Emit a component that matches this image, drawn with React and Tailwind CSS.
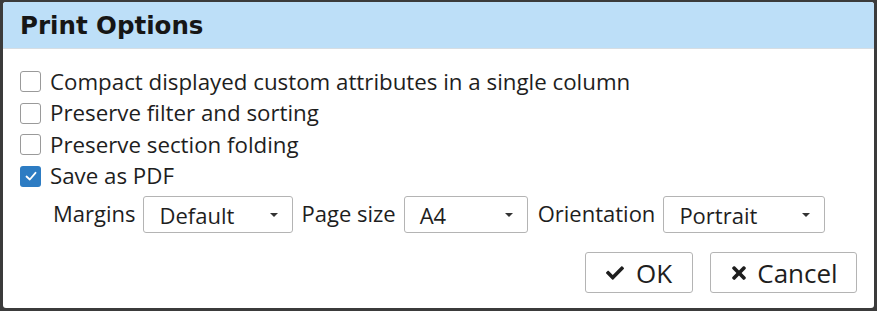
import { FaCheck, FaTimes } from "react-icons/fa";

const body = { fontFamily: '"Open Sans", "Noto Sans", sans-serif' };

function Box({ checked }) {
  if (checked) {
    return (
      <span className="flex h-[21px] w-[21px] shrink-0 items-center justify-center rounded-[3px] bg-[#2d7cc3]">
        <svg width="14" height="14" viewBox="0 0 14 14" fill="none">
          <path d="M2.5 7.5 L5.8 10.5 L11.5 3.8" stroke="white" strokeWidth="1.8" strokeLinecap="round" strokeLinejoin="round" />
        </svg>
      </span>
    );
  }
  return <span className="h-[21px] w-[21px] shrink-0 rounded-[3px] border border-[#9a9a9a] bg-white" />;
}

function Option({ label, checked }) {
  return (
    <div className="flex h-[31.5px] items-center gap-[9px]">
      <Box checked={checked} />
      <span className="text-[22.3px] leading-none text-[#1e1e1e]">{label}</span>
    </div>
  );
}

function Select({ value, width }) {
  return (
    <div className={`flex h-[37px] items-center justify-between rounded-[3px] border border-[#b4b4b4] bg-white pl-[15px] pr-[14px] ${width}`}>
      <span className="text-[22px] leading-none text-[#1e1e1e]">{value}</span>
      <span className="h-0 w-0 border-x-[4px] border-t-[4px] border-x-transparent border-t-[#333]" />
    </div>
  );
}

export default function App() {
  return (
    <div className="h-[311px] w-[877px] bg-[#3b3b3b] pb-[3px] pl-[3px] pr-[3px] pt-[2px]" style={body}>
      <div className="flex h-full flex-col overflow-hidden rounded-[3px] bg-white">
        <div className="flex h-[47px] shrink-0 items-center border-b border-[#d6dde3] bg-[#bddff8] px-[17px]">
          <h1 className="pt-[2px] text-[24.5px] font-bold text-[#161616]" style={{ fontFamily: '"DejaVu Sans", sans-serif' }}>
            Print Options
          </h1>
        </div>

        <div className="flex flex-1 flex-col pl-[17px] pr-[17px] pt-[17px]">
          <Option label="Compact displayed custom attributes in a single column" />
          <Option label="Preserve filter and sorting" />
          <Option label="Preserve section folding" />
          <Option label="Save as PDF" checked />

          <div className="mt-[4px] flex items-center pl-[33px] text-[22px] leading-none text-[#1e1e1e]">
            <span className="mr-[8px] pb-[3px]">Margins</span>
            <Select value="Default" width="w-[150px]" />
            <span className="ml-[8px] mr-[8px] pb-[3px]">Page size</span>
            <Select value="A4" width="w-[124px]" />
            <span className="ml-[10px] mr-[8px] pb-[3px]">Orientation</span>
            <Select value="Portrait" width="w-[162px]" />
          </div>

          <div className="mt-auto flex justify-end gap-[17px] pb-[15px]">
            <button className="flex h-[41px] w-[108px] items-center justify-center gap-[12px] rounded-[3px] border border-[#b4b4b4] bg-white text-[26px] leading-none text-[#1e1e1e]">
              <FaCheck className="text-[18px]" />
              <span>OK</span>
            </button>
            <button className="flex h-[41px] w-[147px] items-center justify-center gap-[8px] rounded-[3px] border border-[#b4b4b4] bg-white text-[26px] leading-none text-[#1e1e1e]">
              <FaTimes className="text-[20px]" />
              <span>Cancel</span>
            </button>
          </div>
        </div>
      </div>
    </div>
  );
}
